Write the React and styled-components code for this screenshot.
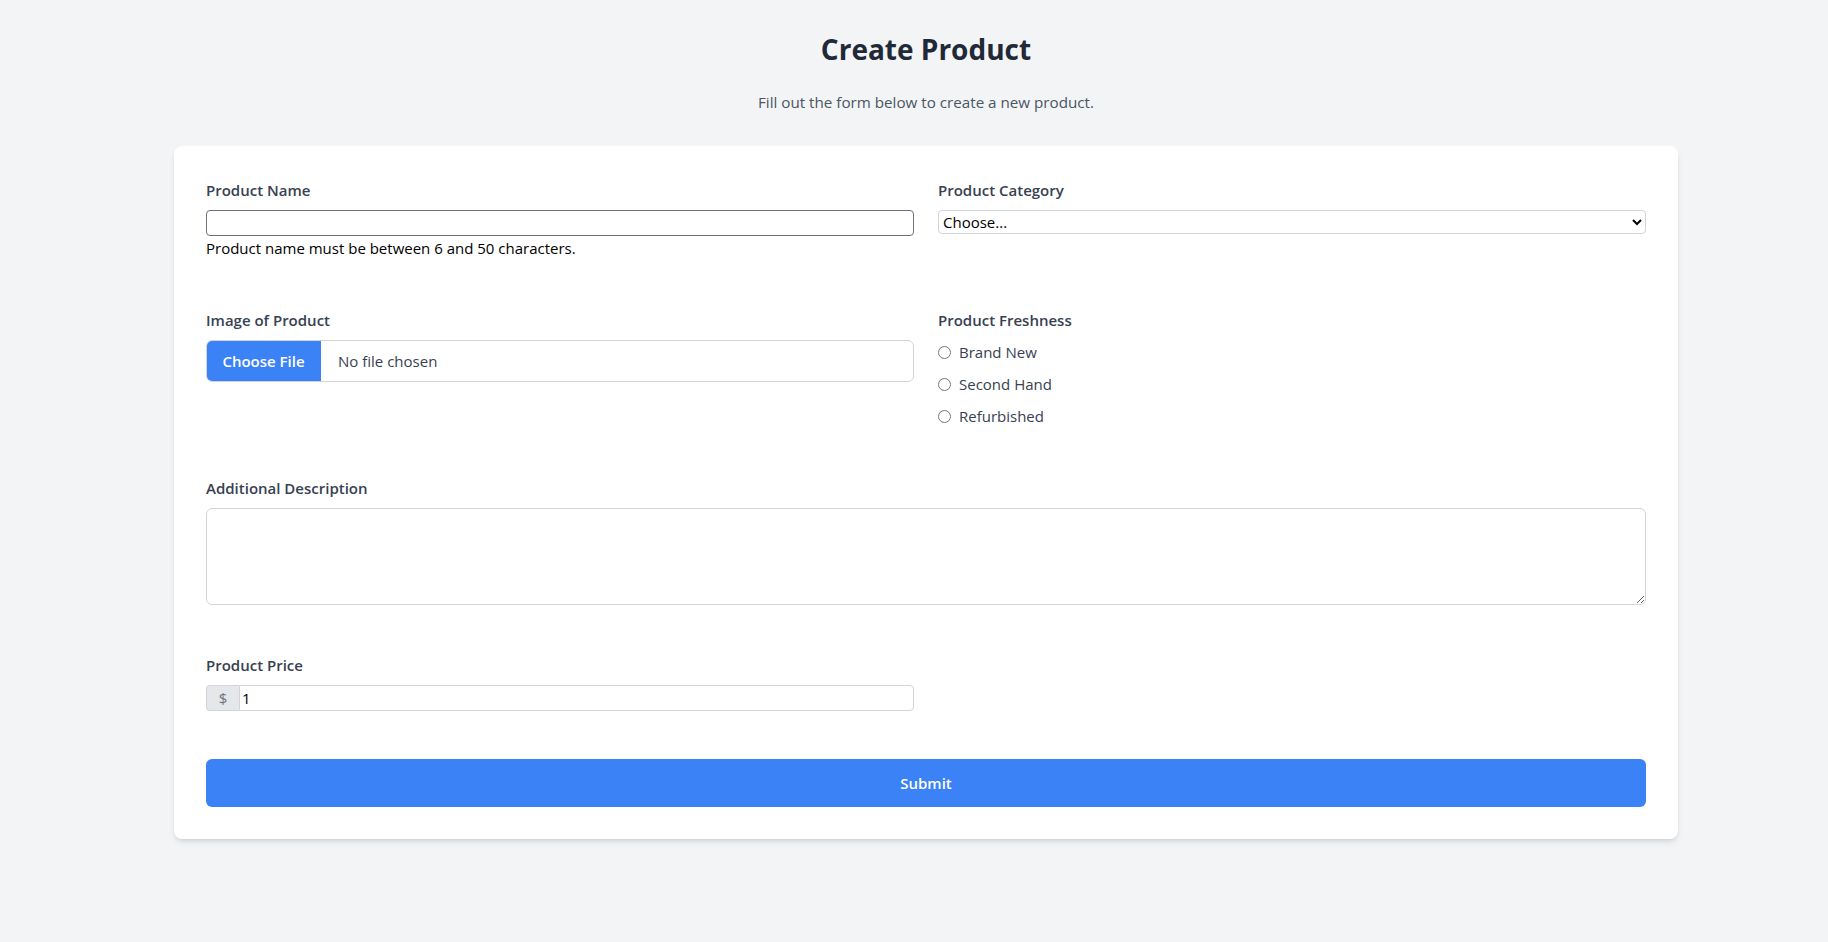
import React from 'react'
import styled, { createGlobalStyle } from 'styled-components'

export default function App() {
    return (
        <>
            <GlobalStyle />
            <Page>
                <Header>
                    <Title>Create Product</Title>
                    <Subtitle>Fill out the form below to create a new product.</Subtitle>
                </Header>
                <Card onSubmit={(e) => e.preventDefault()}>
                    <Grid>
                        <Field>
                            <Label htmlFor="name">Product Name</Label>
                            <TextInput id="name" type="text" $strong />
                            <Helper>Product name must be between 6 and 50 characters.</Helper>
                        </Field>
                        <Field>
                            <Label htmlFor="category">Product Category</Label>
                            <Select id="category" defaultValue="">
                                <option value="">Choose...</option>
                                <option value="electronics">Electronics</option>
                                <option value="clothing">Clothing</option>
                            </Select>
                        </Field>

                        <Field>
                            <Label>Image of Product</Label>
                            <FileBox>
                                <FileButton type="button">Choose File</FileButton>
                                <FileName>No file chosen</FileName>
                            </FileBox>
                        </Field>
                        <Field>
                            <Label>Product Freshness</Label>
                            <RadioList>
                                {['Brand New', 'Second Hand', 'Refurbished'].map((item) => (
                                    <RadioItem key={item}>
                                        <Radio type="radio" name="freshness" value={item} />
                                        {item}
                                    </RadioItem>
                                ))}
                            </RadioList>
                        </Field>

                        <Field $full>
                            <Label htmlFor="desc">Additional Description</Label>
                            <TextArea id="desc" />
                        </Field>

                        <Field>
                            <Label htmlFor="price">Product Price</Label>
                            <PriceGroup>
                                <Prefix>$</Prefix>
                                <PriceInput id="price" type="text" defaultValue="1" />
                            </PriceGroup>
                        </Field>
                    </Grid>
                    <Submit type="submit">Submit</Submit>
                </Card>
            </Page>
        </>
    )
}

const GlobalStyle = createGlobalStyle`
    * {
        box-sizing: border-box;
    }
    body {
        margin: 0;
        background: #f3f4f6;
        font-family: "Open Sans", "Noto Sans", sans-serif;
    }
`

const Page = styled.div`
    width: 1504px;
    margin-left: 174px;
    padding: 31px 0 60px;
`

const Header = styled.header`
    text-align: center;
`

const Title = styled.h1`
    margin: 0 0 23px;
    font-size: 28px;
    line-height: 36px;
    font-weight: 700;
    color: #1f2937;
`

const Subtitle = styled.p`
    margin: 0 0 32px;
    font-size: 15.2px;
    line-height: 24px;
    color: #4b5563;
`

const Card = styled.form`
    background: #fff;
    border-radius: 8px;
    padding: 34px 32px 32px;
    box-shadow: 0 4px 6px -1px rgba(0, 0, 0, 0.1), 0 2px 4px -2px rgba(0, 0, 0, 0.1);
`

const Grid = styled.div`
    display: grid;
    grid-template-columns: 1fr 1fr;
    column-gap: 24px;
    row-gap: 50px;
`

const Field = styled.div`
    display: flex;
    flex-direction: column;
    grid-column: ${(p) => (p.$full ? '1 / -1' : 'auto')};
`

const Label = styled.label`
    font-size: 15px;
    font-weight: 600;
    line-height: 20px;
    color: #374151;
    margin-bottom: 10px;
`

const TextInput = styled.input`
    height: 26px;
    width: 100%;
    border: 1px solid ${(p) => (p.$strong ? '#6b7280' : '#d1d5db')};
    border-radius: 4px;
    padding: 1px 3px;
    font-family: inherit;
    font-size: 15px;
    background: #fff;
`

const Helper = styled.span`
    font-size: 15px;
    line-height: 24px;
    color: #000;
`

const Select = styled.select`
    height: 24px;
    width: 100%;
    border: 1px solid #d1d5db;
    border-radius: 4px;
    font-family: inherit;
    font-size: 15px;
    color: #000;
    background: #fff;
`

const FileBox = styled.div`
    display: flex;
    height: 42px;
    border: 1px solid #d1d5db;
    border-radius: 6px;
    overflow: hidden;
`

const FileButton = styled.button`
    width: 115px;
    margin: -1px 0 -1px -1px;
    border: none;
    border-radius: 6px 0 0 6px;
    background: #3b82f6;
    color: #fff;
    font-family: inherit;
    font-size: 15px;
    font-weight: 600;
`

const FileName = styled.span`
    display: flex;
    align-items: center;
    padding-left: 17px;
    font-size: 15px;
    color: #374151;
`

const RadioList = styled.div`
    display: flex;
    flex-direction: column;
    gap: 8px;
`

const RadioItem = styled.label`
    display: flex;
    align-items: center;
    gap: 8px;
    height: 24px;
    font-size: 15px;
    color: #374151;
`

const Radio = styled.input`
    margin: 0;
    width: 13px;
    height: 13px;
`

const TextArea = styled.textarea`
    width: 100%;
    height: 97px;
    border: 1px solid #d1d5db;
    border-radius: 6px;
    resize: vertical;
    font-family: inherit;
    font-size: 15px;
`

const PriceGroup = styled.div`
    display: flex;
    height: 26px;
`

const Prefix = styled.span`
    display: flex;
    align-items: center;
    justify-content: center;
    width: 33px;
    background: #e5e7eb;
    border: 1px solid #d1d5db;
    border-right: none;
    border-radius: 4px 0 0 4px;
    color: #6b7280;
    font-size: 15px;
`

const PriceInput = styled.input`
    flex: 1;
    min-width: 0;
    border: 1px solid #d1d5db;
    border-radius: 0 4px 4px 0;
    padding: 0 2px;
    font-family: inherit;
    font-size: 15px;
    color: #000;
`

const Submit = styled.button`
    display: block;
    width: 100%;
    height: 48px;
    margin-top: 48px;
    border: none;
    border-radius: 6px;
    background: #3b82f6;
    color: #fff;
    font-family: inherit;
    font-size: 15px;
    font-weight: 600;
`
